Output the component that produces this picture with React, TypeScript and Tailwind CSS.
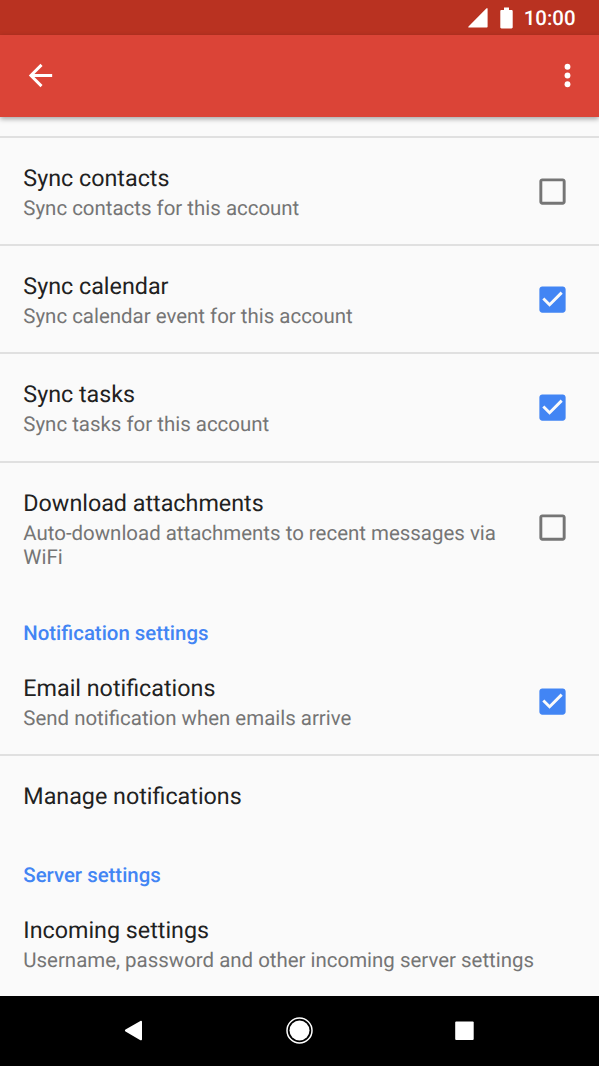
type Setting = {
  title: string;
  summary?: string;
  checked?: boolean;
};

const syncSettings: Setting[] = [
  { title: "Sync contacts", summary: "Sync contacts for this account", checked: false },
  { title: "Sync calendar", summary: "Sync calendar event for this account", checked: true },
  { title: "Sync tasks", summary: "Sync tasks for this account", checked: true },
  {
    title: "Download attachments",
    summary: "Auto-download attachments to recent messages via WiFi",
    checked: false,
  },
];

const notificationSettings: Setting[] = [
  { title: "Email notifications", summary: "Send notification when emails arrive", checked: true },
  { title: "Manage notifications" },
];

const serverSettings: Setting[] = [
  { title: "Incoming settings", summary: "Username, password and other incoming server settings" },
];

function Checkbox({ checked }: { checked: boolean }) {
  return (
    <svg viewBox="0 0 24 24" className={checked ? "size-[35px] shrink-0 fill-[#4285f4]" : "size-[35px] shrink-0 fill-[#757575]"}>
      {checked ? (
        <path d="M19 3H5c-1.11 0-2 .9-2 2v14c0 1.1.89 2 2 2h14c1.11 0 2-.9 2-2V5c0-1.1-.89-2-2-2zm-9 14l-5-5 1.41-1.41L10 14.17l7.59-7.59L19 8l-9 9z" />
      ) : (
        <path d="M19 5v14H5V5h14m0-2H5c-1.1 0-2 .9-2 2v14c0 1.1.9 2 2 2h14c1.1 0 2-.9 2-2V5c0-1.1-.9-2-2-2z" />
      )}
    </svg>
  );
}

function Row({ title, summary, checked }: Setting) {
  return (
    <div className="flex items-center pr-[29px] pl-[23.3px]">
      <div className="flex-1 pt-[26px] pb-[24.2px]">
        <div className="text-[23.3px] leading-[28px] text-[#212121]">{title}</div>
        {summary ? (
          <div className="mt-1 text-[20.45px] leading-[24px] text-[#757575]">{summary}</div>
        ) : null}
      </div>
      {checked !== undefined ? (
        <div className="ml-[23px] flex">
          <Checkbox checked={checked} />
        </div>
      ) : null}
    </div>
  );
}

function Group({ heading, items }: { heading?: string; items: Setting[] }) {
  return (
    <section>
      {heading ? (
        <h2 className="h-[55.3px] px-[23.3px] pt-[28.3px] text-[20.4px] leading-[24px] font-medium text-[#4285f4]">
          {heading}
        </h2>
      ) : null}
      <div className="divide-y-2 divide-[#e0e0e0]">
        {items.map((item) => (
          <Row key={item.title} {...item} />
        ))}
      </div>
    </section>
  );
}

function StatusBar() {
  return (
    <div className="flex h-[35px] items-center justify-end bg-[#b93221] pr-[23.5px] text-white">
      <svg viewBox="0 0 20 20" className="mr-3 size-[20px] fill-current">
        <path d="M19.6 0.6v18.2a.8.8 0 0 1-.8.8H1c-.8 0-1-.7-.5-1.2L18.3.5c.5-.5 1.3-.3 1.3.1z" />
      </svg>
      <svg viewBox="0 0 13 22" className="mr-[11px] h-[22px] w-[13px] fill-current">
        <path d="M4 .5h5V3h2.5c.7 0 1.2.5 1.2 1.2v16.1c0 .7-.5 1.2-1.2 1.2h-10C.8 21.5.3 21 .3 20.3V4.2C.3 3.5.8 3 1.5 3H4z" />
      </svg>
      <span className="pt-px text-[20.4px] leading-[24px] font-medium">10:00</span>
    </div>
  );
}

function AppBar() {
  return (
    <header className="z-10 flex h-[81.5px] items-center justify-between bg-[#db4437] pr-[14.5px] pl-[23px] text-white shadow-[0_2px_5px_rgba(0,0,0,0.35)]">
      <svg viewBox="0 0 24 24" className="size-[35px] fill-current">
        <path d="M20 11H7.83l5.59-5.59L12 4l-8 8 8 8 1.41-1.41L7.83 13H20v-2z" />
      </svg>
      <svg viewBox="0 0 24 24" className="size-[35px] fill-current">
        <circle cx="12" cy="6" r="2" />
        <circle cx="12" cy="12" r="2" />
        <circle cx="12" cy="18" r="2" />
      </svg>
    </header>
  );
}

function NavBar() {
  return (
    <nav className="flex h-[70px] shrink-0 items-center justify-center gap-[130.5px] bg-black pr-px pb-px text-white">
      <svg viewBox="0 0 35 35" className="size-[35px] fill-current">
        <path d="M26 8.7v17.6c0 1-.8 1.3-1.6.9L9.5 18.5c-.8-.5-.8-1.4 0-1.9L24.4 7.9c.8-.5 1.6-.2 1.6.8z" />
      </svg>
      <svg viewBox="0 0 35 35" className="size-[35px] fill-current">
        <circle cx="17.5" cy="17.5" r="12.5" fill="none" stroke="currentColor" strokeWidth="1.5" />
        <circle cx="17.5" cy="17.5" r="10" />
      </svg>
      <svg viewBox="0 0 35 35" className="size-[35px] fill-current">
        <rect x="8.2" y="8.5" width="18.5" height="18.5" rx="1" />
      </svg>
    </nav>
  );
}

export default function App() {
  return (
    <div className="flex h-screen flex-col overflow-hidden bg-[#fafafa] font-[Roboto,sans-serif] [text-rendering:geometricPrecision]">
      <StatusBar />
      <AppBar />
      <main className="min-h-0 flex-1 overflow-hidden pt-[19.5px]">
        <div className="border-t-2 border-[#e0e0e0]">
          <Group items={syncSettings} />
          <Group heading="Notification settings" items={notificationSettings} />
          <Group heading="Server settings" items={serverSettings} />
        </div>
      </main>
      <NavBar />
    </div>
  );
}
